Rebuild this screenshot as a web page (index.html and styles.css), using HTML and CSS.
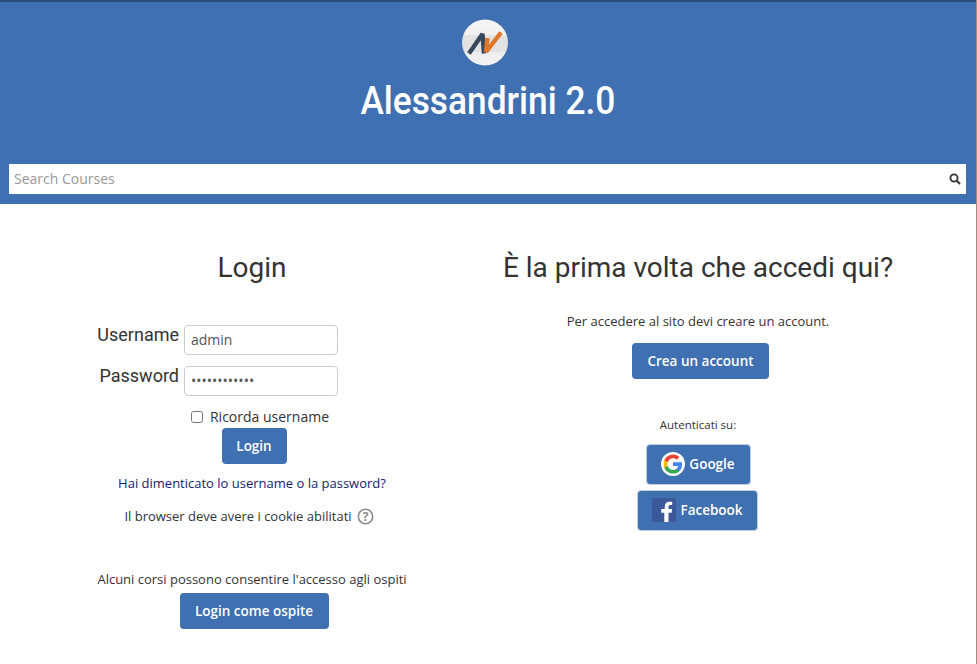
FILE: index.html
```html
<!DOCTYPE html>
<html lang="en">
<head>
    <meta charset="UTF-8">
    <title>Alessandrini 2.0</title>
    <link rel="stylesheet" href="styles.css">
</head>
<body>
    <header class="site-header">
        <svg class="logo" width="46" height="47" viewBox="0 0 46 47">
            <defs>
                <linearGradient id="logo-bg" x1="0" y1="0" x2="0" y2="1">
                    <stop offset="0" stop-color="#f6f6f6"/>
                    <stop offset="0.34" stop-color="#f0f0f0"/>
                    <stop offset="0.35" stop-color="#e2e2e2"/>
                    <stop offset="0.7" stop-color="#e2e2e2"/>
                    <stop offset="0.72" stop-color="#eeeeee"/>
                    <stop offset="1" stop-color="#f2f2f2"/>
                </linearGradient>
            </defs>
            <circle cx="23" cy="23.500" r="23" fill="url(#logo-bg)"/>
            <path d="M7 34.500 L20.500 15 L22 34.500" fill="none" stroke="#36475c" stroke-width="4.400" stroke-linejoin="bevel"/>
            <path d="M25.500 19 L24 33 L39 13.500" fill="none" stroke="#e0782a" stroke-width="4.400" stroke-linejoin="bevel"/>
        </svg>
        <div class="site-name">Alessandrini 2.0</div>
        <form class="search">
            <span class="search-text">Search Courses</span>
            <svg width="12" height="12" viewBox="0 0 12 12">
                <circle cx="5" cy="5" r="3.600" fill="none" stroke="#333" stroke-width="1.800"/>
                <path d="M7.800 7.800 L11 11" stroke="#333" stroke-width="2"/>
            </svg>
        </form>
    </header>

    <main class="login-page">
        <!-- Login form -->
        <section class="col col-login">
            <h2>Login</h2>
            <div class="field first">
                <label>Username</label>
                <input type="text" value="admin">
            </div>
            <div class="field">
                <label>Password</label>
                <input type="password" value="adminadmin12">
            </div>
            <label class="remember"><input type="checkbox"> Ricorda username</label>
            <button class="btn btn-login">Login</button>
            <a class="forgot" href="#">Hai dimenticato lo username o la password?</a>
            <p class="cookies">Il browser deve avere i cookie abilitati
                <svg width="17" height="17" viewBox="0 0 17 17">
                    <circle cx="8.500" cy="8.500" r="7.200" fill="none" stroke="#8c8c8c" stroke-width="1.600"/>
                    <text x="8.500" y="13" text-anchor="middle" class="help-mark">?</text>
                </svg>
            </p>
            <p class="guest-note">Alcuni corsi possono consentire l'accesso agli ospiti</p>
            <button class="btn btn-guest">Login come ospite</button>
        </section>

        <!-- Signup and external providers -->
        <section class="col col-signup">
            <h2>È la prima volta che accedi qui?</h2>
            <p class="signup-note">Per accedere al sito devi creare un account.</p>
            <button class="btn btn-signup">Crea un account</button>
            <p class="auth-note">Autenticati su:</p>
            <a class="btn provider provider-google" href="#">
                <svg width="24" height="24" viewBox="0 0 24 24">
                    <circle cx="12" cy="12" r="12" fill="#fff"/>
                    <g transform="translate(12 12) scale(1.200) translate(-12 -12)">
                        <path d="M19.600 12.200c0-.6-.1-1.100-.2-1.600H12v3.100h4.300c-.2 1-.7 1.800-1.600 2.400v2h2.500c1.500-1.400 2.400-3.400 2.400-5.900z" fill="#4285f4"/>
                        <path d="M12 20c2.200 0 4-.7 5.200-1.900l-2.500-2c-.7.500-1.600.8-2.700.8-2.100 0-3.900-1.400-4.500-3.300H4.900v2C6.200 18.200 8.900 20 12 20z" fill="#34a853"/>
                        <path d="M7.500 13.600c-.3-1-.3-2.100 0-3.100v-2H4.900c-.9 1.700-.9 5.400 0 7.100z" fill="#fbbc05"/>
                        <path d="M12 7.200c1.200 0 2.300.4 3.100 1.200l2.300-2.300C16 4.800 14.200 4 12 4 8.900 4 6.200 5.800 4.900 8.500l2.600 2c.6-1.900 2.400-3.300 4.500-3.300z" fill="#ea4335"/>
                    </g>
                </svg>
                Google
            </a>
            <a class="btn provider provider-facebook" href="#">
                <svg width="24" height="24" viewBox="0 0 24 24">
                    <rect width="24" height="24" fill="#3b5998"/>
                    <path d="M16.500 24v-9.300h3.100l.5-3.600h-3.600V8.800c0-1 .3-1.800 1.800-1.800h1.900V3.800c-.3 0-1.500-.1-2.800-.1-2.800 0-4.600 1.700-4.600 4.800v2.600H9.200v3.600h3.100V24z" fill="#fff"/>
                </svg>
                Facebook
            </a>
        </section>
    </main>
</body>
</html>
```
FILE: styles.css
```css
* {
    box-sizing: border-box;
}

body {
    margin: 0;
    height: 664px;
    overflow: hidden;
    background: #fff;
    color: #333;
    font-family: "Open Sans", sans-serif;
    font-size: 13px;
    border-right: 1px solid #a08c80;
}

.site-header {
    height: 204px;
    background: #3f70b1;
    border-top: 2px solid #2a4f78;
    padding: 17px 10px 0 9px;
    display: flex;
    flex-direction: column;
    align-items: center;
}

.logo {
    margin-right: 5px;
}

.site-name {
    margin-top: 8px;
    height: 54px;
    color: #fff;
    font-family: Roboto, sans-serif;
    font-size: 39px;
    font-weight: 500;
    line-height: 54px;
    transform: scaleX(0.905);
}

.search {
    margin-top: 36px;
    width: 100%;
    height: 30px;
    background: #fff;
    display: flex;
    align-items: center;
    justify-content: space-between;
    padding: 0 5px;
    flex: none;
}

.search-text {
    color: #999;
    font-size: 14px;
    margin-bottom: 2px;
}

.login-page {
    display: grid;
    grid-template-columns: 504px 388px;
}

.col {
    display: flex;
    flex-direction: column;
    align-items: center;
}

h2 {
    margin: 47px 0 0;
    height: 34px;
    font-family: Roboto, sans-serif;
    font-size: 28px;
    font-weight: 400;
    line-height: 34px;
    color: #333;
    white-space: nowrap;
}

.btn {
    background: #3f70b1;
    color: #fff;
    border: none;
    border-radius: 4px;
    font-family: "Open Sans", sans-serif;
    font-size: 13.500px;
    font-weight: 600;
    text-decoration: none;
    display: flex;
    align-items: center;
    justify-content: center;
}

.field {
    display: flex;
    align-items: flex-start;
    justify-content: flex-end;
    gap: 5px;
    width: 240px;
    margin-top: 11px;
    margin-right: 68px;
}

.field.first {
    margin-top: 40px;
}

.field label {
    font-family: Roboto, sans-serif;
    font-size: 18px;
    line-height: 20px;
}

.field input {
    width: 154px;
    height: 30px;
    border: 1px solid #ccc;
    border-radius: 4px;
    padding: 0 6px 2px;
    color: #555;
    font-family: "Open Sans", sans-serif;
    font-size: 14px;
    flex: none;
}

.remember {
    margin-top: 11px;
    font-size: 14px;
    line-height: 20px;
    display: flex;
    align-items: center;
    gap: 7px;
    margin-left: 16px;
}

.remember input {
    margin: 0;
    width: 12px;
    height: 12px;
}

.btn-login {
    width: 65px;
    height: 36px;
    margin-top: 1px;
    margin-left: 4px;
}

.forgot {
    margin-top: 10px;
    color: #1a1a6e;
    text-decoration: none;
    line-height: 18px;
}

.cookies {
    margin: 15px 6px 0 0;
    display: flex;
    align-items: center;
    gap: 5px;
    line-height: 18px;
    white-space: nowrap;
}

.help-mark {
    font-family: "Open Sans", sans-serif;
    font-size: 12px;
    font-weight: 700;
    fill: #8c8c8c;
}

.guest-note {
    margin: 45px 0 0;
    line-height: 18px;
}

.btn-guest {
    width: 149px;
    height: 36px;
    margin-top: 5px;
    margin-left: 4px;
}

.signup-note {
    margin: 27px 0 0;
    line-height: 18px;
}

.btn-signup {
    width: 137px;
    height: 36px;
    margin-top: 13px;
    margin-left: 5px;
}

.auth-note {
    margin: 37px 0 0;
    font-size: 11.500px;
    line-height: 18px;
}

.provider {
    gap: 4px;
    height: 41px;
    border: 1px solid #c3cfe0;
    padding-bottom: 2px;
}

.provider svg {
    flex: none;
}

.provider-google {
    width: 105px;
    margin-top: 10px;
}

.provider-facebook {
    width: 121px;
    margin-top: 5px;
    margin-right: 1px;
}
```
